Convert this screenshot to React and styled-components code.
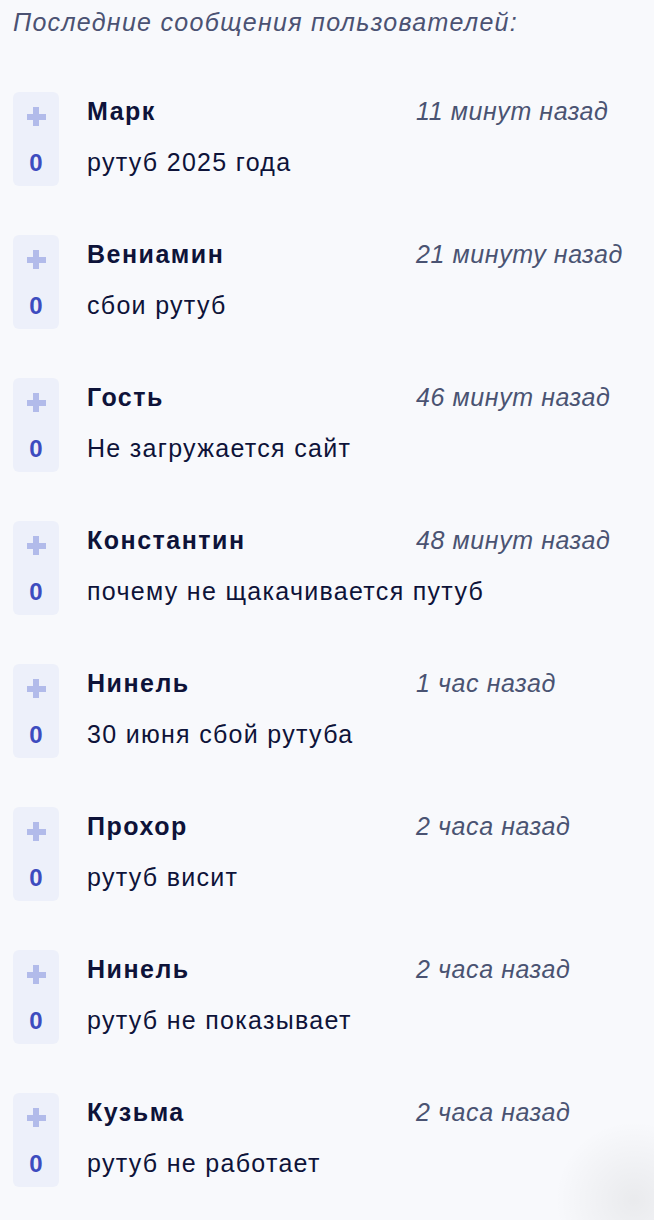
import styled, { createGlobalStyle } from 'styled-components'

const GlobalStyle = createGlobalStyle`
  html, body {
    margin: 0;
    padding: 0;
    background: #f8f9fc;
  }
  body {
    font-family: "Liberation Sans", Arial, sans-serif;
  }
`

const Page = styled.div`
  min-height: 1220px;
  padding: 0 13px;
  box-sizing: border-box;
  position: relative;
  overflow: hidden;
`

const Title = styled.h2`
  margin: 0;
  padding-top: 7px;
  font-size: 25px;
  line-height: 30px;
  font-weight: 400;
  font-style: italic;
  letter-spacing: 1.3px;
  color: #4b5273;
`

const List = styled.div`
  display: flex;
  flex-direction: column;
  gap: 49px;
  margin-top: 55px;
`

const Item = styled.div`
  display: flex;
  align-items: flex-start;
`

const Vote = styled.div`
  width: 46px;
  height: 94px;
  flex-shrink: 0;
  border-radius: 6px;
  background: #edf0fa;
  display: flex;
  flex-direction: column;
  align-items: center;
`

const Plus = styled.div`
  margin-top: 15px;
  width: 19px;
  height: 19px;
  position: relative;
  &::before, &::after {
    content: '';
    position: absolute;
    background: #b2bbea;
  }
  &::before {
    left: 0;
    right: 0;
    top: 6.5px;
    height: 6px;
  }
  &::after {
    top: 0;
    bottom: 0;
    left: 6.5px;
    width: 6px;
  }
`

const Count = styled.div`
  margin-top: 23px;
  font-size: 24px;
  line-height: 28px;
  font-weight: 700;
  color: #3d4cbf;
`

const Body = styled.div`
  flex: 1;
  margin-left: 28px;
  padding-top: 5px;
`

const Head = styled.div`
  display: flex;
  align-items: baseline;
`

const Name = styled.div`
  width: 329px;
  flex-shrink: 0;
  font-size: 25px;
  line-height: 28px;
  font-weight: 700;
  letter-spacing: 1.5px;
  color: #0e1339;
`

const Time = styled.div`
  font-size: 25px;
  line-height: 28px;
  font-style: italic;
  letter-spacing: 0.6px;
  color: #4a5372;
  white-space: nowrap;
`

const Text = styled.div`
  margin-top: 23px;
  font-size: 25px;
  line-height: 28px;
  letter-spacing: 1.3px;
  color: #0e1339;
  white-space: nowrap;
`

const Shade = styled.div`
  position: absolute;
  right: -60px;
  bottom: -60px;
  width: 160px;
  height: 160px;
  border-radius: 50%;
  background: radial-gradient(circle, rgba(0, 0, 0, 0.06) 0%, rgba(0, 0, 0, 0) 70%);
  pointer-events: none;
`

const messages = [
  { name: 'Марк', time: '11 минут назад', text: 'рутуб 2025 года' },
  { name: 'Вениамин', time: '21 минуту назад', text: 'сбои рутуб' },
  { name: 'Гость', time: '46 минут назад', text: 'Не загружается сайт' },
  { name: 'Константин', time: '48 минут назад', text: 'почему не щакачивается путуб' },
  { name: 'Нинель', time: '1 час назад', text: '30 июня сбой рутуба' },
  { name: 'Прохор', time: '2 часа назад', text: 'рутуб висит' },
  { name: 'Нинель', time: '2 часа назад', text: 'рутуб не показывает' },
  { name: 'Кузьма', time: '2 часа назад', text: 'рутуб не работает' },
]

const App = () => {
  return (
    <Page>
      <GlobalStyle />
      <Title>Последние сообщения пользователей:</Title>
      <List>
        {messages.map((m, i) => (
          <Item key={i}>
            <Vote>
              <Plus />
              <Count>0</Count>
            </Vote>
            <Body>
              <Head>
                <Name>{m.name}</Name>
                <Time>{m.time}</Time>
              </Head>
              <Text>{m.text}</Text>
            </Body>
          </Item>
        ))}
      </List>
      <Shade />
    </Page>
  )
}

export default App
